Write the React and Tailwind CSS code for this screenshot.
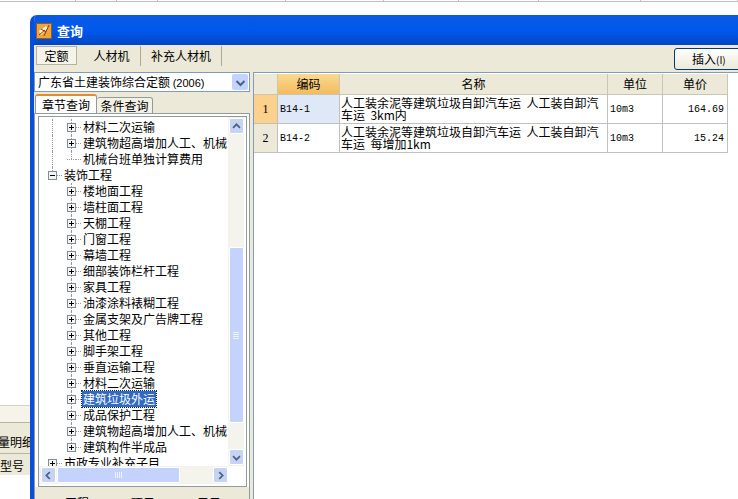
const cjk = { fontFamily: '"Noto Sans CJK SC", "Liberation Sans", sans-serif' };

const treeRows = [
  { label: "材料二次运输", level: 2, box: "plus", line1: true, line2: "full" },
  { label: "建筑物超高增加人工、机械", level: 2, box: "plus", line1: true, line2: "full" },
  { label: "机械台班单独计算费用", level: 2, line1: true, line2: "end" },
  { label: "装饰工程", level: 1, box: "minus", line1: "end" },
  { label: "楼地面工程", level: 2, box: "plus", line2: "full" },
  { label: "墙柱面工程", level: 2, box: "plus", line2: "full" },
  { label: "天棚工程", level: 2, box: "plus", line2: "full" },
  { label: "门窗工程", level: 2, box: "plus", line2: "full" },
  { label: "幕墙工程", level: 2, box: "plus", line2: "full" },
  { label: "细部装饰栏杆工程", level: 2, box: "plus", line2: "full" },
  { label: "家具工程", level: 2, box: "plus", line2: "full" },
  { label: "油漆涂料裱糊工程", level: 2, box: "plus", line2: "full" },
  { label: "金属支架及广告牌工程", level: 2, box: "plus", line2: "full" },
  { label: "其他工程", level: 2, box: "plus", line2: "full" },
  { label: "脚手架工程", level: 2, box: "plus", line2: "full" },
  { label: "垂直运输工程", level: 2, box: "plus", line2: "full" },
  { label: "材料二次运输", level: 2, box: "plus", line2: "full" },
  { label: "建筑垃圾外运", level: 2, box: "plus", line2: "full", selected: true },
  { label: "成品保护工程", level: 2, box: "plus", line2: "full" },
  { label: "建筑物超高增加人工、机械", level: 2, box: "plus", line2: "full" },
  { label: "建筑构件半成品", level: 2, box: "plus", line2: "end" },
  { label: "市政专业补充子目", level: 1, box: "plus" },
];

function Expander({ type }) {
  return (
    <span className="relative z-10 flex h-[9px] w-[9px] shrink-0 items-center justify-center border border-[#7b8ea0] bg-[#f4f3ee]">
      <span className="absolute h-px w-[5px] bg-black" />
      {type === "plus" && <span className="absolute h-[5px] w-px bg-black" />}
    </span>
  );
}

function TreeRow({ row }) {
  const boxLeft = row.level === 1 ? "pl-[9px]" : "pl-[28px]";
  return (
    <div className={`relative flex h-4 w-[240px] shrink-0 items-center ${boxLeft}`}>
      {row.line1 && (
        <span
          className={`absolute left-[13px] top-0 w-0 border-l border-dotted border-[#9a9a9a] ${row.line1 === "end" ? "h-[8px]" : "h-4"}`}
        />
      )}
      {row.line2 && (
        <span
          className={`absolute left-[32px] top-0 w-0 border-l border-dotted border-[#9a9a9a] ${row.line2 === "end" ? "h-[8px]" : "h-4"}`}
        />
      )}
      {row.box ? <Expander type={row.box} /> : <span className="w-[9px] shrink-0 border-t border-dotted border-[#9a9a9a]" />}
      <span className="w-[5px] shrink-0 border-t border-dotted border-[#9a9a9a]" />
      <span
        className={`ml-px whitespace-nowrap px-px text-[12px] leading-4 ${
          row.selected
            ? "bg-[#316ac5] text-white outline-1 outline-dotted outline-[#10243f]"
            : "text-black"
        }`}
      >
        {row.label}
      </span>
    </div>
  );
}

function ScrollButton({ dir, className = "" }) {
  const paths = {
    up: "M3.5 9 L7.5 5 L11.5 9",
    down: "M3.5 6 L7.5 10 L11.5 6",
    left: "M9 3.5 L5 7.5 L9 11.5",
    right: "M6 3.5 L10 7.5 L6 11.5",
  };
  return (
    <div
      className={`flex h-[16px] w-[15px] shrink-0 items-center justify-center rounded-[2px] border border-white bg-[#c5d4f3] ${className}`}
    >
      <svg width="15" height="15" viewBox="0 0 15 15">
        <path d={paths[dir]} fill="none" stroke="#4d6185" strokeWidth="2" />
      </svg>
    </div>
  );
}

function Grip({ vertical }) {
  return (
    <div className={`flex gap-px ${vertical ? "flex-col" : "flex-row"}`}>
      {[0, 1, 2, 3].map((i) => (
        <span
          key={i}
          className={vertical ? "h-px w-[6px] bg-[#eef3fd]" : "h-[6px] w-px bg-[#eef3fd]"}
        />
      ))}
    </div>
  );
}

function TreePanel() {
  return (
    <div className="flex h-[371px] w-[209px] shrink-0 flex-col border border-[#919b9c] bg-white">
      <div className="flex h-[349px] shrink-0">
        <div className="w-[189px] shrink-0 overflow-hidden pt-[2px]">
          {treeRows.map((row, i) => (
            <TreeRow key={i} row={row} />
          ))}
        </div>
        <div className="flex w-[16px] shrink-0 flex-col items-center bg-[#f4f3ec] py-px">
          <ScrollButton dir="up" />
          <div className="mt-[113px] flex h-[176px] w-[15px] items-center justify-center rounded-[2px] border border-white bg-[#c3d3fd]">
            <Grip vertical />
          </div>
          <div className="flex-1" />
          <ScrollButton dir="down" />
        </div>
      </div>
      <div className="flex h-[18px] w-[189px] shrink-0 items-center gap-px bg-[#f4f3ec] pl-[2px]">
        <ScrollButton dir="left" />
        <div className="flex h-[16px] w-[123px] items-center justify-center rounded-[2px] border border-white bg-[#c3d3fd]">
          <Grip />
        </div>
        <div className="flex-1" />
        <ScrollButton dir="right" />
      </div>
    </div>
  );
}

function LeftPane() {
  return (
    <div className="flex w-[216px] shrink-0 flex-col">
      <div className="flex h-[20px] items-center justify-between border border-[#7f9db9] bg-white pl-[3px] pr-px">
        <span className="whitespace-nowrap text-[12px]">
          广东省土建装饰综合定额 <span className="text-[11px]" style={{ fontFamily: '"Liberation Sans", sans-serif' }}>(2006)</span>
        </span>
        <div className="flex h-[16px] w-[16px] items-center justify-center rounded-[2px] bg-[#c3d3fd]">
          <svg width="15" height="15" viewBox="0 0 15 15">
            <path d="M3.5 6 L7.5 10 L11.5 6" fill="none" stroke="#4d6185" strokeWidth="2" />
          </svg>
        </div>
      </div>
      <div className="mt-[2px] flex h-[20px] items-end pl-px">
        <div className="flex h-[20px] w-[62px] items-center justify-center rounded-t-[3px] border border-b-0 border-[#919b9c] border-t-2 border-t-[#e68b2c] bg-white text-[12px]">
          章节查询
        </div>
        <div className="flex h-[17px] w-[56px] items-center justify-center rounded-t-[3px] border border-l-0 border-[#919b9c] bg-[#f3f1e6] text-[12px]">
          条件查询
        </div>
      </div>
      <div className="-mt-px flex h-[400px] flex-col border border-[#919b9c] bg-white pt-[2px]">
        <div className="px-[3px]">
          <TreePanel />
        </div>
        <div className="flex flex-1 gap-[42px] bg-[#ece9d8] pl-[30px] pt-[8px] text-[12px] leading-4">
          <span>工程</span>
          <span>项目</span>
          <span>子目</span>
        </div>
      </div>
    </div>
  );
}

const gridCell = "flex shrink-0 border-b border-r border-[#c0c0c0]";

function DataRow({ no, code, name, price, first }) {
  return (
    <div className="flex h-[29px]">
      <div className={`${gridCell} w-[24px] items-center justify-center text-[12px] ${first ? "bg-[#fbd18b]" : "bg-[#ece9d8]"}`} style={{ fontFamily: '"Liberation Serif", serif' }}>
        {no}
      </div>
      <div className={`${gridCell} w-[62px] items-center pl-[2px] font-['Liberation_Mono'] text-[10px] ${first ? "bg-[#dfe8f6]" : "bg-white"}`}>
        {code}
      </div>
      <div className={`${gridCell} w-[268px] items-center bg-white pl-px pr-px text-[12px] leading-[12px]`}>
        {name}
      </div>
      <div className={`${gridCell} w-[55px] items-center bg-white pl-[2px] font-['Liberation_Mono'] text-[10px]`}>
        10m3
      </div>
      <div className={`${gridCell} w-[65px] items-center justify-end bg-white pr-[3px] font-['Liberation_Mono'] text-[10px]`}>
        {price}
      </div>
    </div>
  );
}

function GridPane() {
  const head = "flex h-[21px] shrink-0 items-center justify-center border-b border-r border-[#c9c6b4] text-[12px]";
  return (
    <div className="h-[430px] flex-1 border-l border-t border-[#7f9db9] bg-white pt-px">
      <div className="flex">
        <div className={`${head} w-[24px] bg-[#ece9d8]`} />
        <div className={`${head} w-[62px] bg-gradient-to-b from-[#f9d98f] to-[#f3bb5e]`}>编码</div>
        <div className={`${head} w-[268px] bg-[#ece9d8]`}>名称</div>
        <div className={`${head} w-[55px] bg-[#ece9d8]`}>单位</div>
        <div className={`${head} w-[65px] bg-[#ece9d8]`}>单价</div>
      </div>
      <DataRow
        first
        no="1"
        code="B14-1"
        price="164.69"
        name={<span className="whitespace-pre-wrap">人工装余泥等建筑垃圾自卸汽车运{"  "}人工装自卸汽车运{"  "}3km内</span>}
      />
      <DataRow
        no="2"
        code="B14-2"
        price="15.24"
        name={<span className="whitespace-pre-wrap">人工装余泥等建筑垃圾自卸汽车运{"  "}人工装自卸汽车运{"  "}每增加1km</span>}
      />
    </div>
  );
}

function TitleIcon() {
  return (
    <svg width="16" height="16" viewBox="0 0 16 16" className="shrink-0">
      <rect x="0.5" y="0.5" width="15" height="15" fill="#f0a63a" stroke="#9a5a18" />
      <path d="M3 8 L10 3 L12 5 L5 12 Z" fill="#fff3d6" />
      <path d="M3 12 L9 7 M5 6 L10 9 M13 2 L8 13" stroke="#8a3d12" strokeWidth="1" fill="none" />
    </svg>
  );
}

function QueryWindow() {
  return (
    <div className="absolute left-[30px] top-[15px] flex h-[520px] w-[730px] flex-col overflow-hidden rounded-t-[7px] border-l-4 border-[#0a4fd8] bg-[#ece9d8]" style={cjk}>
      <div className="-ml-[3px] flex h-[30px] shrink-0 items-center gap-[5px] bg-gradient-to-b from-[#0a5ae0] via-[#0058ee] to-[#0346c4] pl-[5px] pt-px">
        <TitleIcon />
        <span className="text-[13px] font-bold text-white">查询</span>
      </div>
      <div className="flex h-[27px] shrink-0 items-start justify-between pr-[16px]">
        <div className="flex h-[22px] items-stretch pl-[2px] pt-px text-[12px]">
          <div className="mb-[2px] flex w-[41px] items-center justify-center border border-[#b5b2a0] bg-[#f6f4ea]">定额</div>
          <div className="mb-px flex w-[64px] items-center justify-center border-r border-[#aca899] pb-px pl-[6px]">人材机</div>
          <div className="mb-px flex w-[81px] items-center justify-center border-r border-[#aca899] pb-px">补充人材机</div>
        </div>
        <div className="mt-[3px] flex h-[22px] w-[70px] items-center rounded-[3px] border border-[#003c74] bg-gradient-to-b from-white to-[#ece9d8] pl-[17px] text-[12px]">
          插入<span className="text-[10px]">(I)</span>
        </div>
      </div>
      <div className="flex">
        <LeftPane />
        <div className="w-[3px] shrink-0" />
        <GridPane />
      </div>
    </div>
  );
}

function BackgroundSheet() {
  const ticks = [76, 41, 41, 128, 98, 75, 80, 102, 97];
  return (
    <div className="flex h-full flex-col" style={cjk}>
      <div className="flex h-[2px] border-b border-[#c0c0c0]">
        {ticks.map((w, i) => (
          <div key={i} className="border-r border-[#c0c0c0]" style={{ width: w }} />
        ))}
      </div>
      <div className="mt-[403px] h-[17px] w-[34px] border-t border-[#d5d2c2] bg-[#f5f3ea]" />
      <div className="flex h-[31px] w-[34px] items-center justify-end overflow-hidden whitespace-nowrap border-t border-[#b8b5a5] bg-[#ece9d8] pt-[8px] text-[12px]">量明细</div>
      <div className="flex h-[22px] w-[34px] items-center border-t border-[#b8b5a5] bg-[#ece9d8] pt-[2px] text-[12px]">型号</div>
    </div>
  );
}

export default function App() {
  return (
    <div className="relative h-[499px] w-[738px] overflow-hidden bg-white" style={cjk}>
      <BackgroundSheet />
      <QueryWindow />
    </div>
  );
}
